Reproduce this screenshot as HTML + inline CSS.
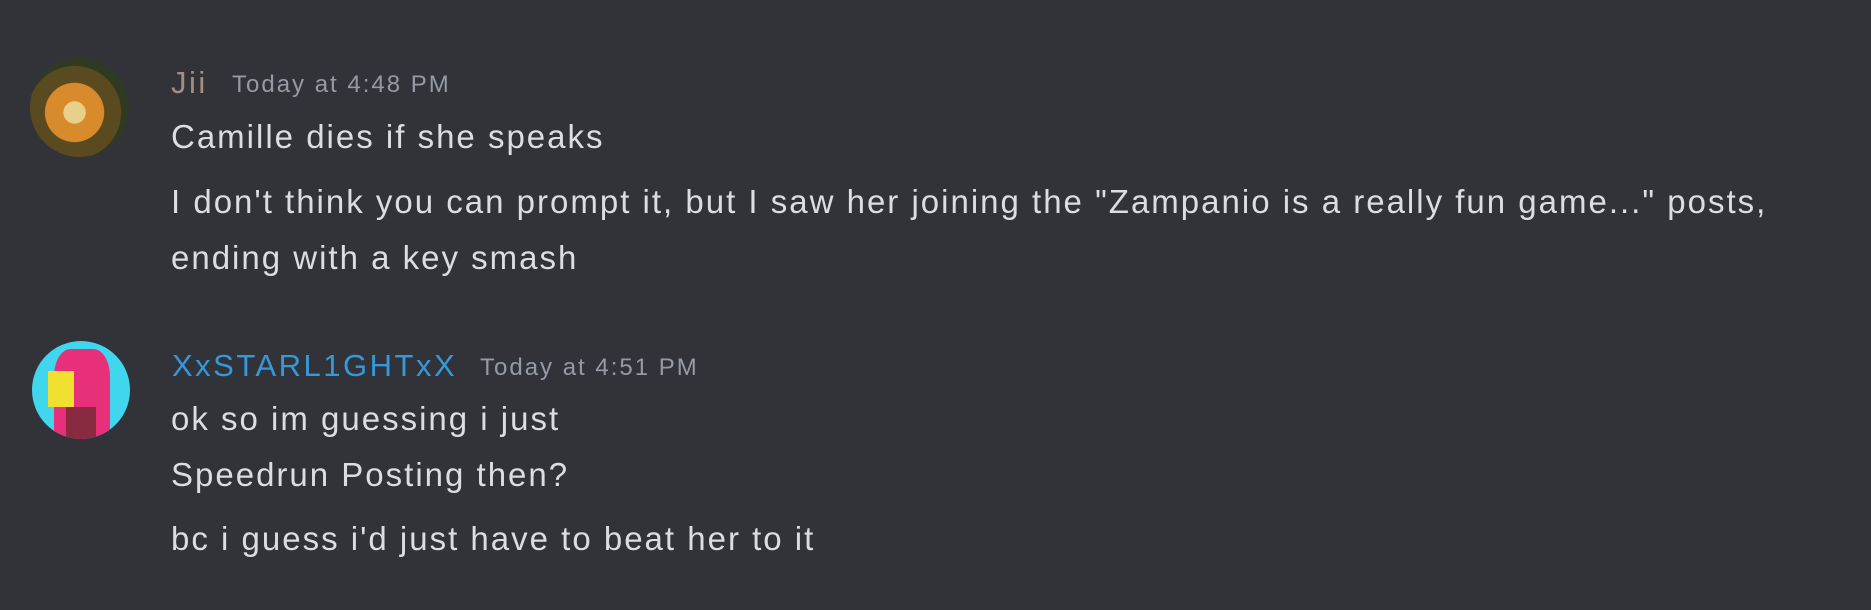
<!DOCTYPE html>
<html><head><meta charset="utf-8"><style>
html,body{margin:0;padding:0;}
body{width:1871px;height:610px;background:#313338;position:relative;overflow:hidden;font-family:"Liberation Sans",sans-serif;}
.t{position:absolute;white-space:nowrap;line-height:1;}
.m{font-size:33px;letter-spacing:2px;color:#dbdee1;left:171px;}
.ts{font-size:24px;letter-spacing:2px;color:#949ba4;}
.av{position:absolute;border-radius:50%;overflow:hidden;}
</style></head><body>
<div class="av" style="left:30px;top:58px;width:99px;height:99px;background:radial-gradient(circle at 45% 55%,#e8d08a 0 14%,#d98a2a 15% 38%,#5a4a20 39% 60%,#2e3a22 61% 100%);"></div>
<div class="av" style="left:32px;top:341px;width:98px;height:98px;background:#3fd6ee;">
  <div style="position:absolute;left:22px;top:8px;width:56px;height:90px;background:#e8307a;border-radius:30% 30% 10% 10%;"></div>
  <div style="position:absolute;left:16px;top:30px;width:26px;height:36px;background:#f0e030;"></div>
  <div style="position:absolute;left:34px;top:66px;width:30px;height:32px;background:#8a2a40;"></div>
</div>
<div class="t" style="left:171px;top:67px;font-size:31px;letter-spacing:2.5px;color:#a68d82;">Jii</div>
<div class="t ts" style="left:232px;top:73px;">Today at 4:48 PM</div>
<div class="t m" style="top:120px;">Camille dies if she speaks</div>
<div class="t m" style="top:185px;">I don't think you can prompt it, but I saw her joining the "Zampanio is a really fun game..." posts,</div>
<div class="t m" style="top:241px;">ending with a key smash</div>
<div class="t" style="left:172px;top:350px;font-size:31px;letter-spacing:2.5px;color:#3498db;">XxSTARL1GHTxX</div>
<div class="t ts" style="left:480px;top:356px;">Today at 4:51 PM</div>
<div class="t m" style="top:402px;">ok so im guessing i just</div>
<div class="t m" style="top:458px;">Speedrun Posting then?</div>
<div class="t m" style="top:522px;">bc i guess i'd just have to beat her to it</div>
</body></html>
